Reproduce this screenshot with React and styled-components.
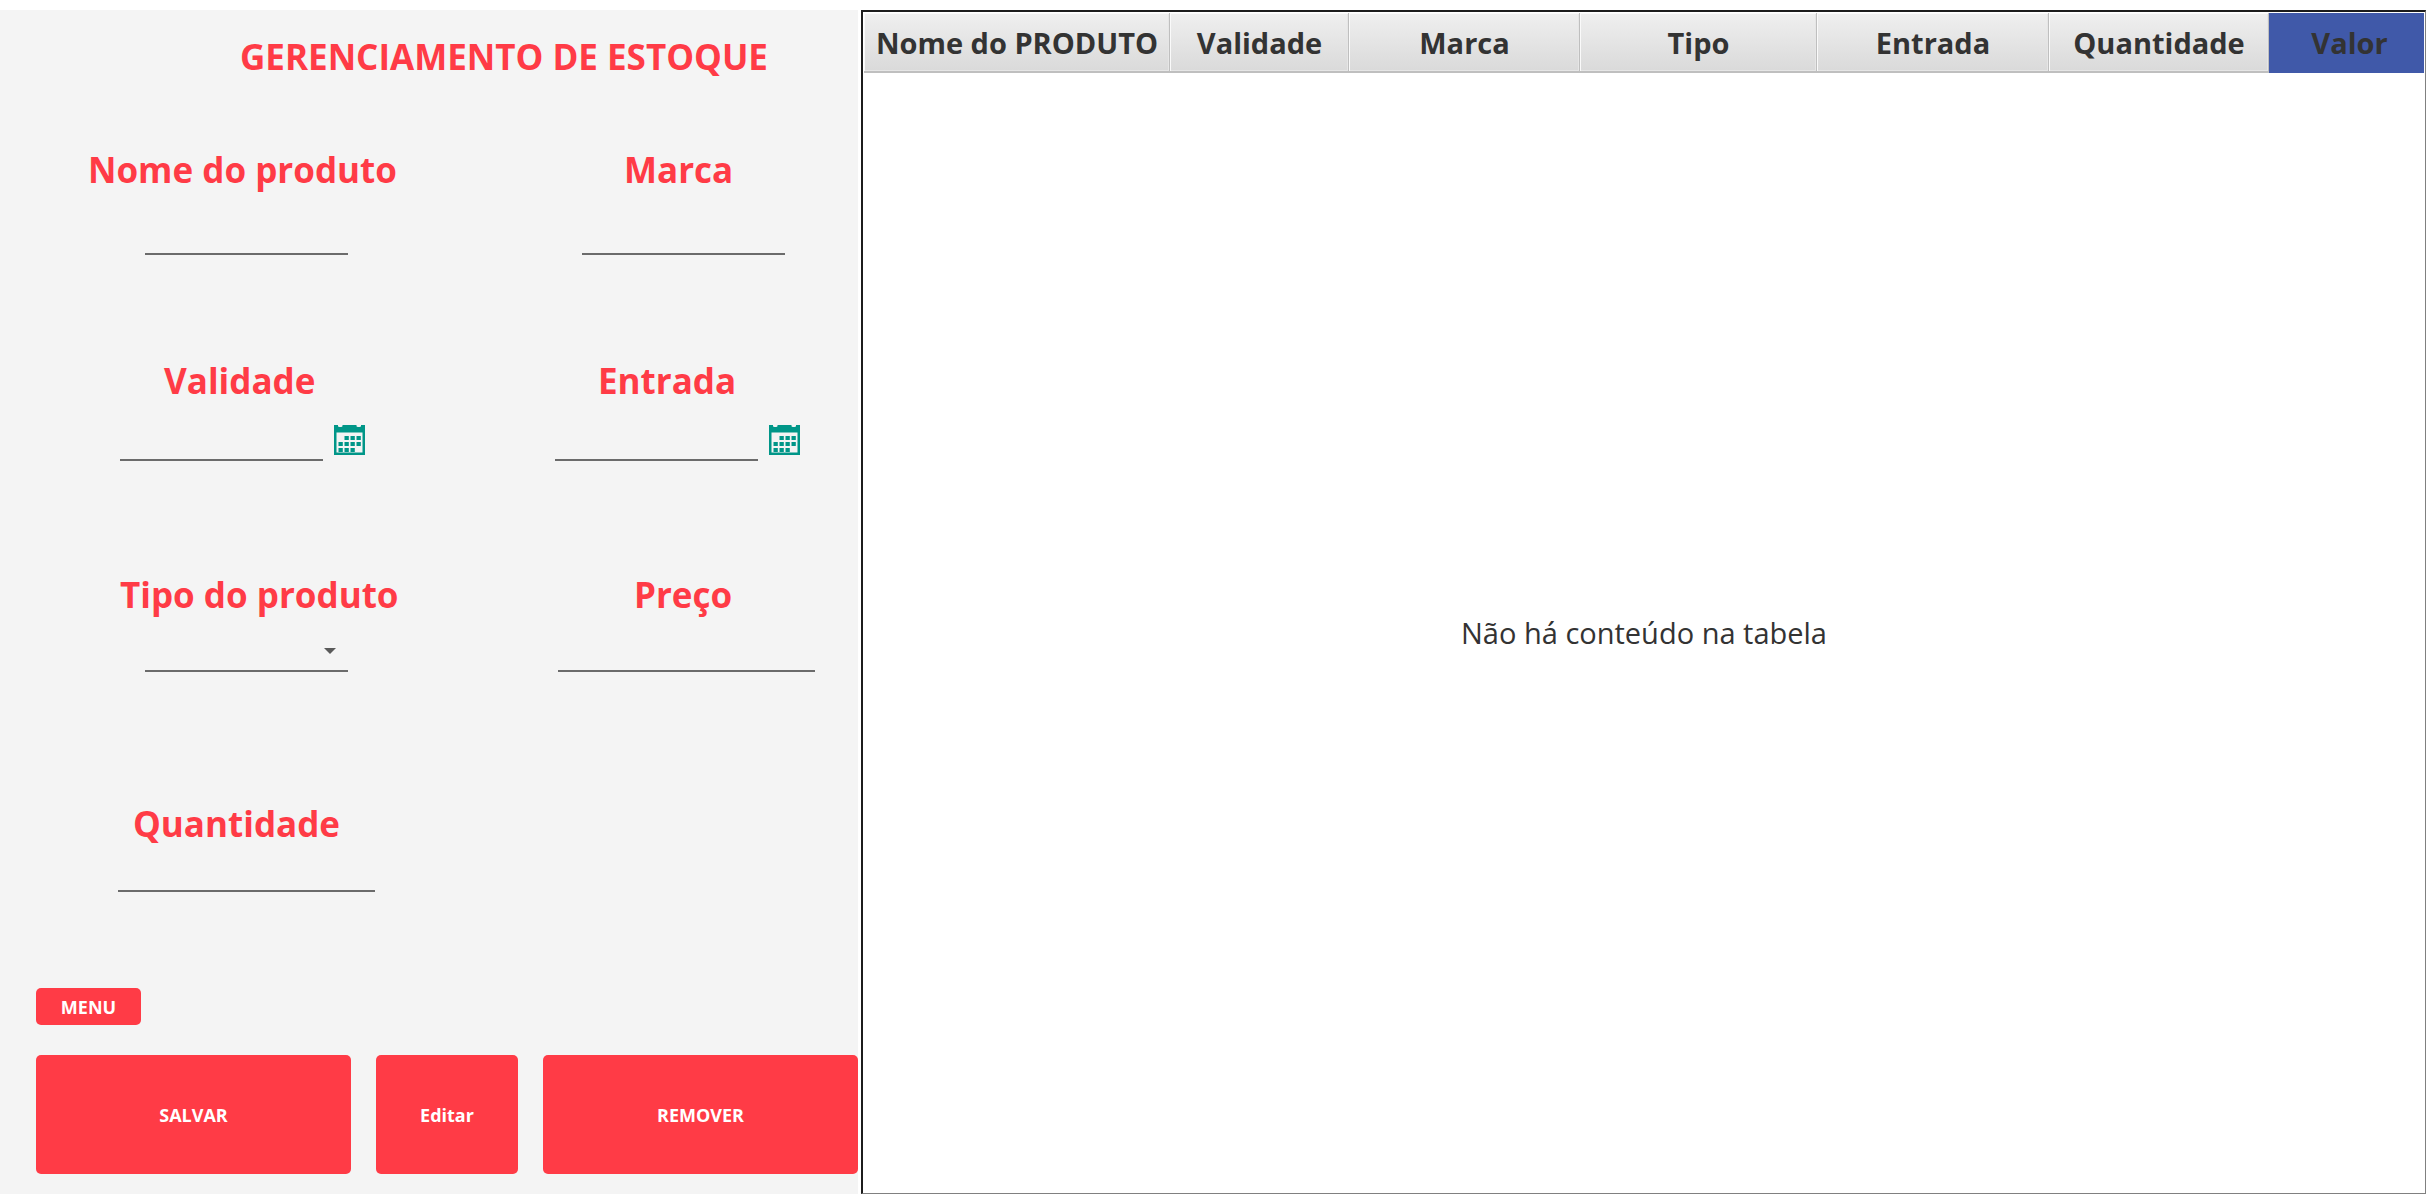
import React, { useId } from "react";
import styled, { createGlobalStyle } from "styled-components";

const GlobalStyle = createGlobalStyle`
  *, *::before, *::after { box-sizing: border-box; }
  body {
    margin: 0;
    background: #fff;
    color: #333;
    font-family: "Open Sans", "Noto Sans", sans-serif;
  }
  button, input, select { font: inherit; color: inherit; }
`;

const red = "#ff3b46";

const Page = styled.main`
  display: flex;
  min-height: 100vh;
  padding-top: 10px;
`;

const Panel = styled.form`
  flex: none;
  width: 858px;
  margin-right: 3px;
  display: flex;
  flex-direction: column;
  background: #f4f4f4;
`;

const Title = styled.h1`
  margin: 0 0 65px;
  padding: 23px 0 0 240px;
  font-size: 35px;
  line-height: 48px;
  font-weight: 700;
  color: ${red};
  white-space: nowrap;
`;

const Fields = styled.div`
  display: grid;
  grid-template-columns: 465px 1fr;
  grid-template-rows: 211px 214px 229px auto;
  padding-left: 88px;
`;

const FieldBox = styled.div`
  display: flex;
  flex-direction: column;
  align-items: flex-start;
`;

const Label = styled.label`
  padding-left: ${(p) => p.$indent}px;
  font-size: 35px;
  line-height: 48px;
  font-weight: 700;
  color: ${red};
  white-space: nowrap;
`;

const Control = styled.div`
  position: relative;
  display: flex;
  align-items: flex-end;
  gap: 11px;
  height: ${(p) => p.$height}px;
  margin-left: ${(p) => p.$indent}px;
`;

const Input = styled.input`
  width: ${(p) => (p.$wide ? 257 : 203)}px;
  height: 40px;
  padding: 0;
  border: 0;
  border-bottom: 2px solid #6b6b6b;
  border-radius: 0;
  background: transparent;
  font-size: 18px;
  outline: none;
`;

const Select = styled(Input).attrs({ as: "select" })`
  appearance: none;
  padding-right: 28px;
`;

const Arrow = styled.svg`
  position: absolute;
  right: 12px;
  bottom: 18px;
  pointer-events: none;
`;

const IconButton = styled.button`
  display: flex;
  padding: 0 0 6px;
  border: 0;
  background: none;
  cursor: pointer;
`;

const Actions = styled.div`
  margin-top: auto;
  padding: 0 0 20px 36px;
`;

const ActionRow = styled.div`
  display: flex;
  gap: 25px;
  margin-top: 30px;
`;

const Button = styled.button`
  width: ${(p) => p.$width}px;
  height: ${(p) => (p.$tall ? 119 : 37)}px;
  padding: 0;
  border: 0;
  border-radius: 5px;
  background: ${red};
  color: #fff;
  font-size: 18px;
  line-height: 24px;
  font-weight: 700;
  cursor: pointer;
`;

const TablePane = styled.section`
  flex: 1;
  min-width: 0;
  display: flex;
  padding: 1px 1px 0;
  border: 1px solid #808080;
  border-top: 2px solid #1c1c1c;
  border-left: 2px solid #1c1c1c;
`;

const Table = styled.table`
  width: 100%;
  table-layout: fixed;
  border-collapse: collapse;
`;

const HeadCell = styled.th`
  width: ${(p) => (p.$width ? `${p.$width}px` : "auto")};
  height: 60px;
  padding: ${(p) => (p.$active ? "0 0 0 6px" : "0")};
  background: ${(p) =>
    p.$active ? "#4059a9" : "linear-gradient(#efefef, #d9d9d9)"};
  box-shadow: ${(p) =>
    p.$active
      ? "none"
      : "inset -1px -2px 0 #bfbfbf, inset 1px 1px 0 #fafafa, inset -2px -3px 0 #e6e6e6"};
  font-size: 29px;
  line-height: 40px;
  font-weight: 700;
  white-space: nowrap;
`;

const Empty = styled.td`
  padding: 0;
  text-align: center;
  vertical-align: middle;
  font-size: 29px;
  line-height: 40px;
`;

function CalendarIcon() {
  const days = [
    [12, 11], [18, 11], [24, 11],
    [6, 17], [12, 17], [18, 17], [24, 17],
    [6, 23], [12, 23], [18, 23],
  ];
  return (
    <svg width="31" height="30" viewBox="0 0 31 30" aria-hidden="true">
      <path
        fill="#009688"
        fillRule="evenodd"
        d="M0 0H4V1Q4 2 5.500 2H7Q8.500 2 8.500 1V0H22.500V1Q22.500 2 24 2H25.500Q27 2 27 1V0H31V30H0ZM2.500 7.500V27.500H28.500V7.500Z"
      />
      {days.map(([x, y]) => (
        <rect key={`${x}-${y}`} x={x - 1.5} y={y} width="4.300" height="4" fill="#009688" />
      ))}
    </svg>
  );
}

function Field({ label, type = "text", labelIndent, indent, height, wide }) {
  const id = useId();
  return (
    <FieldBox>
      <Label htmlFor={id} $indent={labelIndent}>{label}</Label>
      <Control $indent={indent} $height={height}>
        {type === "select" ? (
          <>
            <Select id={id} defaultValue=""><option value="" /></Select>
            <Arrow width="12" height="6" viewBox="0 0 12 6" aria-hidden="true">
              <path d="M0 0H12L6 6Z" fill="#5a5a5a" />
            </Arrow>
          </>
        ) : (
          <Input id={id} type="text" $wide={wide} />
        )}
        {type === "date" && (
          <IconButton type="button" aria-label={`Escolher ${label}`}>
            <CalendarIcon />
          </IconButton>
        )}
      </Control>
    </FieldBox>
  );
}

const fields = [
  { label: "Nome do produto", labelIndent: 0, indent: 57, height: 61 },
  { label: "Marca", labelIndent: 71, indent: 29, height: 61 },
  { label: "Validade", labelIndent: 76, indent: 32, height: 56, type: "date" },
  { label: "Entrada", labelIndent: 45, indent: 2, height: 56, type: "date" },
  { label: "Tipo do produto", labelIndent: 32, indent: 57, height: 53, type: "select" },
  { label: "Preço", labelIndent: 81, indent: 5, height: 53, wide: true },
  { label: "Quantidade", labelIndent: 45, indent: 30, height: 44, wide: true },
];

const columns = [
  { name: "Nome do PRODUTO", width: 306 },
  { name: "Validade", width: 179 },
  { name: "Marca", width: 231 },
  { name: "Tipo", width: 237 },
  { name: "Entrada", width: 232 },
  { name: "Quantidade", width: 220 },
  { name: "Valor", active: true },
];

export default function App() {
  return (
    <>
      <GlobalStyle />
      <Page>
        <Panel onSubmit={(e) => e.preventDefault()}>
          <Title>GERENCIAMENTO DE ESTOQUE</Title>
          <Fields>
            {fields.map((f) => <Field key={f.label} {...f} />)}
          </Fields>
          <Actions>
            <Button type="button" $width={105}>MENU</Button>
            <ActionRow>
              <Button type="submit" $width={315} $tall>SALVAR</Button>
              <Button type="button" $width={142} $tall>Editar</Button>
              <Button type="button" $width={315} $tall>REMOVER</Button>
            </ActionRow>
          </Actions>
        </Panel>
        <TablePane>
          <Table>
            <thead>
              <tr>
                {columns.map((c) => (
                  <HeadCell key={c.name} scope="col" $width={c.width} $active={c.active}>
                    {c.name}
                  </HeadCell>
                ))}
              </tr>
            </thead>
            <tbody>
              <tr>
                <Empty colSpan={columns.length}>Não há conteúdo na tabela</Empty>
              </tr>
            </tbody>
          </Table>
        </TablePane>
      </Page>
    </>
  );
}
